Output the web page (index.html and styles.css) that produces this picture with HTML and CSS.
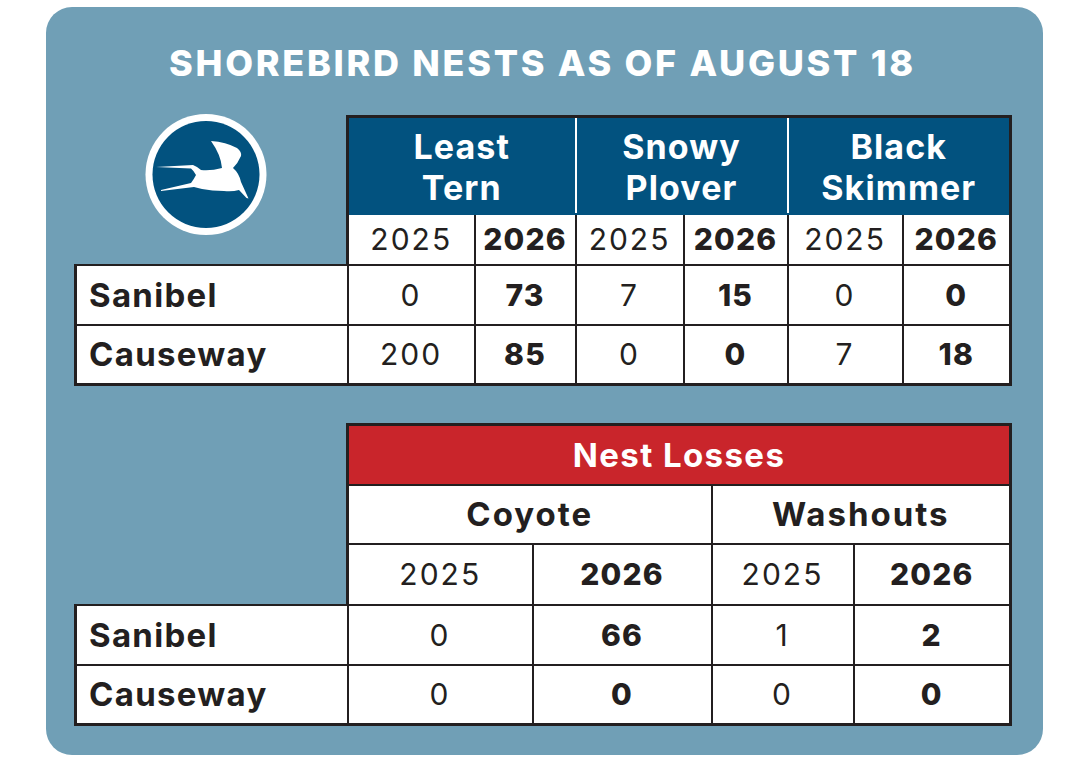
FILE: index.html
```html
<!DOCTYPE html>
<html lang="en">
<head>
<meta charset="utf-8">
<title>Shorebird Nests</title>
<link rel="stylesheet" href="styles.css">
</head>
<body>
<div class="page">
  <section class="panel">
    <h1 class="title">SHOREBIRD NESTS AS OF AUGUST 18</h1>

    <table class="grid nests">
      <colgroup>
        <col class="w-label"><col class="w127"><col class="w101"><col class="w108"><col class="w104"><col class="w115"><col class="w108">
      </colgroup>
      <tr class="species">
        <td class="blank logo-cell" rowspan="2">
          <svg class="logo" viewBox="9 9 122 122" width="122" height="122" aria-hidden="true">
            <circle cx="70" cy="69.5" r="60.5" fill="#ffffff"/>
            <circle cx="70" cy="69.5" r="53.5" fill="#02527f"/>
            <path fill="#ffffff" d="M20,62 L57,60 Q62,62 65,65 Q75,66 86,63 Q85,50 75,36 Q90,37 101,43 Q106,47 105,51 Q102,58 97,63 Q103,68 105,77 L112.5,93.5 L110.5,93 L103,85 Q96,87 88,86 Q76,86 66,84 L58,82 L25,86 L25,85 L55,78 Q58,74 60,70 Q58,66 55,63.5 Z"/>
          </svg>
        </td>
        <th class="first" colspan="2">Least<br>Tern</th>
        <th colspan="2">Snowy<br>Plover</th>
        <th class="last" colspan="2">Black<br>Skimmer</th>
      </tr>
      <tr class="years">
        <td class="first">2025</td><td class="b">2026</td>
        <td>2025</td><td class="b">2026</td>
        <td>2025</td><td class="b last">2026</td>
      </tr>
      <tr class="data">
        <th class="label">Sanibel</th>
        <td>0</td><td class="b">73</td>
        <td>7</td><td class="b">15</td>
        <td>0</td><td class="b last">0</td>
      </tr>
      <tr class="data bottom">
        <th class="label">Causeway</th>
        <td>200</td><td class="b">85</td>
        <td>0</td><td class="b">0</td>
        <td>7</td><td class="b last">18</td>
      </tr>
    </table>

    <table class="grid losses">
      <colgroup>
        <col class="w-label"><col class="w185"><col class="w179"><col class="w142"><col class="w157">
      </colgroup>
      <tr class="loss-head">
        <td class="blank" rowspan="3"></td>
        <th class="red first last" colspan="4">Nest Losses</th>
      </tr>
      <tr class="cause">
        <th class="first" colspan="2">Coyote</th>
        <th class="last" colspan="2">Washouts</th>
      </tr>
      <tr class="years tall">
        <td class="first">2025</td><td class="b">2026</td>
        <td>2025</td><td class="b last">2026</td>
      </tr>
      <tr class="data">
        <th class="label">Sanibel</th>
        <td>0</td><td class="b">66</td>
        <td>1</td><td class="b last">2</td>
      </tr>
      <tr class="data bottom">
        <th class="label">Causeway</th>
        <td>0</td><td class="b">0</td>
        <td>0</td><td class="b last">0</td>
      </tr>
    </table>
  </section>
</div>
</body>
</html>
```
FILE: styles.css
```css
* { box-sizing: border-box; }

body {
  margin: 0;
  background: #ffffff;
  color: #231f20;
  font-family: Inter, "Liberation Sans", sans-serif;
}

.page {
  padding: 7px 0 0 46px;
}

.panel {
  width: 997px;
  height: 748px;
  background: #709fb6;
  border-radius: 26px;
  padding: 34px 33px 0 29px;
}

.title {
  margin: 0;
  font-size: 36px;
  line-height: 44px;
  font-weight: 800;
  color: #ffffff;
  text-align: center;
  letter-spacing: 2.7px;
}

.grid {
  border-collapse: collapse;
  table-layout: fixed;
  width: 935px;
  margin-left: -1px;
}

.nests { margin-top: 30px; }
.losses { margin-top: 37px; }

.w-label { width: 272px; }
.w127 { width: 127px; }
.w101 { width: 101px; }
.w108 { width: 108px; }
.w104 { width: 104px; }
.w115 { width: 115px; }
.w185 { width: 185px; }
.w179 { width: 179px; }
.w142 { width: 142px; }
.w157 { width: 157px; }

.grid td,
.grid th {
  padding: 0;
  border: 2px solid #231f20;
  background: #ffffff;
  text-align: center;
  font-size: 30px;
  font-weight: 400;
  line-height: 36px;
  letter-spacing: 2px;
}

.grid .blank {
  border: none;
  background: transparent;
  vertical-align: top;
}

.grid .logo-cell { padding-left: 69px; }

.logo {
  display: block;
  margin-top: -3px;
}

.grid .b { font-weight: 800; letter-spacing: 1.2px; }

.grid .first { border-left: 3px solid #231f20; }
.grid .last { border-right: 3px solid #231f20; }
.grid .bottom td,
.grid .bottom th { border-bottom: 3px solid #231f20; }

/* species header */
.species th {
  height: 97px;
  background: #02527f;
  color: #ffffff;
  font-size: 34px;
  font-weight: 700;
  line-height: 41px;
  letter-spacing: 1.1px;
  border-top: 3px solid #231f20;
  border-left: 2px solid #ffffff;
  border-right: 2px solid #ffffff;
  border-bottom: 2px solid #02527f;
  padding-top: 4px;
}
.species th.first { border-left: 3px solid #231f20; }
.species th.last { border-right: 3px solid #231f20; }

.years td { height: 51px; }
.years.tall td { height: 61px; }

.data td,
.data th { height: 60px; }

.grid .label {
  text-align: left;
  padding-left: 12px;
  font-size: 33px;
  font-weight: 700;
  letter-spacing: 1.3px;
  border-left: 3px solid #231f20;
}

/* losses header */
.loss-head th {
  height: 60px;
  background: #c9252b;
  color: #ffffff;
  font-size: 33px;
  font-weight: 700;
  letter-spacing: 1.4px;
  border-top: 3px solid #231f20;
}

.cause th {
  height: 59px;
  font-size: 33px;
  font-weight: 700;
  letter-spacing: 2px;
}
```
